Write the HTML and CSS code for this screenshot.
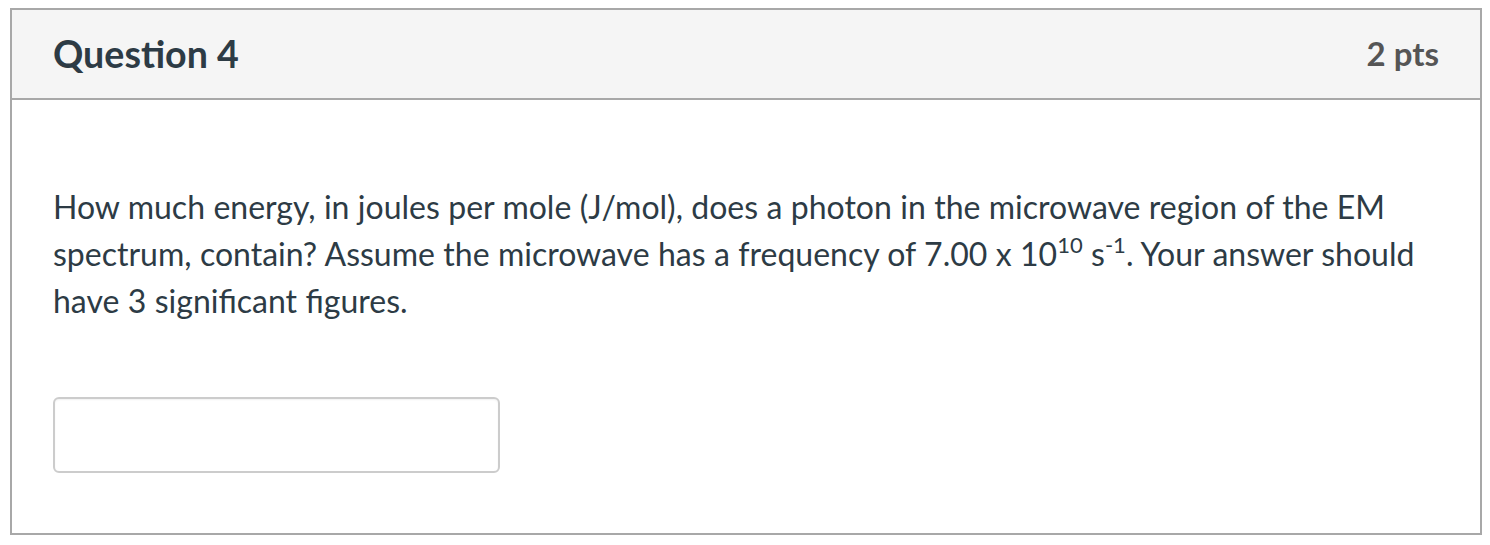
FILE: index.html
```html
<!DOCTYPE html>
<html>
<head>
<meta charset="utf-8">
<link rel="stylesheet" href="styles.css">
</head>
<body>
<div class="question">
  <div class="header">
    <h2 class="title">Question 4</h2>
    <div class="points">2 pts</div>
  </div>
  <div class="body">
    <p class="text">How much energy, in joules per mole (J/mol), does a photon in the microwave region of the EM spectrum, contain? Assume the microwave has a frequency of 7.00 x 10<sup>10</sup> s<sup>-1</sup>. Your answer should have 3 significant figures.</p>
    <input class="answer" type="text">
  </div>
</div>
</body>
</html>
```
FILE: styles.css
```css
html, body { background: #fff; }
body {
  margin: 8px 8px 8px 10px;
  font-family: Lato, "Noto Sans", sans-serif;
  color: #2d3b45;
}
.question {
  border: 2px solid #a8a8a8;
  height: 523px;
  box-sizing: content-box;
  display: flex;
  flex-direction: column;
}
.header {
  background: #f5f5f5;
  border-bottom: 2px solid #a8a8a8;
  height: 88px;
  display: flex;
  align-items: center;
  justify-content: space-between;
  padding: 0 41px 0 41px;
}
.title {
  margin: 0;
  font-size: 37.6px;
  font-weight: 700;
  color: #2d3b45;
  padding-bottom: 2px;
}
.points {
  font-size: 33px;
  font-weight: 700;
  color: #555;
  padding-bottom: 2px;
}
.body {
  padding: 83px 40px 0 41px;
}
.text {
  margin: 0;
  font-size: 32px;
  line-height: 47px;
  word-spacing: 0.2px;
}
.text sup {
  font-size: 22px;
  line-height: 0;
  vertical-align: 0;
  position: relative;
  top: -13px;
}
.answer {
  display: block;
  margin-top: 73px;
  width: 447px;
  height: 76px;
  box-sizing: border-box;
  border: 2px solid #cccccc;
  border-radius: 6px;
  background: #fff;
  box-shadow: inset 0 1px 2px rgba(0,0,0,0.06);
  font: inherit;
  margin-left: 0;
}
```
